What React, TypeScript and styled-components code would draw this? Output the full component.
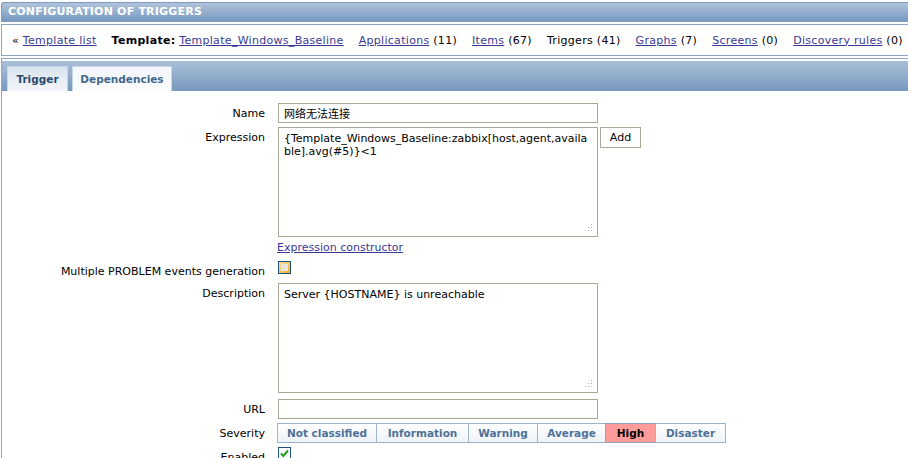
import { createGlobalStyle, styled } from "styled-components";

const GlobalStyle = createGlobalStyle`
  html, body {
    margin: 0;
    padding: 0;
    background: #ffffff;
    overflow: hidden;
  }
  body {
    font-family: "DejaVu Sans", Verdana, "Noto Sans CJK SC", sans-serif;
    font-size: 11px;
    color: #000000;
  }
`;

const navItems = [
	{ label: "Applications", count: 11, link: true },
	{ label: "Items", count: 67, link: true },
	{ label: "Triggers", count: 41, link: false },
	{ label: "Graphs", count: 7, link: true },
	{ label: "Screens", count: 0, link: true },
	{ label: "Discovery rules", count: 0, link: true },
];

const severities = [
	{ name: "Not classified", width: 100 },
	{ name: "Information", width: 93 },
	{ name: "Warning", width: 70 },
	{ name: "Average", width: 69 },
	{ name: "High", width: 51 },
	{ name: "Disaster", width: 71 },
];

const App = () => {
	return (
		<Page>
			<GlobalStyle />
			<HeaderBar>CONFIGURATION OF TRIGGERS</HeaderBar>
			<NavBox>
				<NavItem>
					« <Link>Template list</Link>
				</NavItem>
				<NavItem>
					<b>Template:</b> <Link>Template_Windows_Baseline</Link>
				</NavItem>
				{navItems.map((el) => (
					<NavItem key={el.label}>
						{el.link ? <Link>{el.label}</Link> : el.label} ({el.count})
					</NavItem>
				))}
			</NavBox>
			<TabStrip>
				<TabBar>
					<Tab $active $width={61}>
						Trigger
					</Tab>
					<Tab $width={100}>Dependencies</Tab>
				</TabBar>
			</TabStrip>
			<FormArea>
				<Label>Name</Label>
				<Field>
					<TextInput defaultValue="网络无法连接" />
				</Field>

				<Label>Expression</Label>
				<Field>
					<AreaWrap>
						<TextArea
							defaultValue="{Template_Windows_Baseline:zabbix[host,agent,available].avg(#5)}<1"
						/>
						<Grip />
					</AreaWrap>
					<AddButton>Add</AddButton>
				</Field>

				<Label />
				<Field $ml={-1}>
					<Link>Expression constructor</Link>
				</Field>

				<Label $top={7}>Multiple PROBLEM events generation</Label>
				<Field $height={21}>
					<CheckBox $hover>
						<CheckInner />
					</CheckBox>
				</Field>

				<Label>Description</Label>
				<Field>
					<AreaWrap>
						<TextArea defaultValue="Server {HOSTNAME} is unreachable" />
						<Grip />
					</AreaWrap>
				</Field>

				<Label $mt={2}>URL</Label>
				<Field $mt={2}>
					<TextInput defaultValue="" />
				</Field>

				<Label>Severity</Label>
				<Field>
					<SeverityGroup>
						{severities.map((s) => (
							<SeverityButton
								key={s.name}
								$width={s.width}
								$selected={s.name === "High"}
							>
								{s.name}
							</SeverityButton>
						))}
					</SeverityGroup>
				</Field>

				<Label>Enabled</Label>
				<Field>
					<CheckBox>
						<svg width="11" height="11" viewBox="0 0 11 11">
							<path
								d="M2 5.5 L4.3 8 L9 2.5"
								stroke="#1fa01f"
								strokeWidth="2"
								fill="none"
							/>
						</svg>
					</CheckBox>
				</Field>
			</FormArea>
		</Page>
	);
};

export default App;

const Page = styled.div`
	width: 930px;
	padding-left: 1px;
	padding-top: 2px;
`;

const HeaderBar = styled.div`
	height: 20px;
	box-sizing: border-box;
	border: 1px solid #7e9bc0;
	border-right: none;
	border-radius: 3px 0 0 0;
	background: linear-gradient(#b0c3da, #7899c0);
	color: #ffffff;
	font-weight: bold;
	font-size: 11px;
	line-height: 18px;
	padding-left: 6px;
	letter-spacing: 0.2px;
`;

const NavBox = styled.div`
	margin-top: 2px;
	height: 32px;
	box-sizing: border-box;
	border: 1px solid #8ea7c6;
	border-right: none;
	display: flex;
	align-items: center;
	gap: 15px;
	padding-left: 10px;
	white-space: nowrap;
	letter-spacing: 0.3px;
`;

const NavItem = styled.span`
	color: #000000;

	b {
		font-weight: bold;
	}
`;

const Link = styled.a`
	color: #3a3a96;
	text-decoration: underline;
	cursor: pointer;
`;

const TabStrip = styled.div`
	margin-top: 2px;
	border-top: 1px solid #8ea7c6;
	border-left: 1px solid #8ea7c6;
	padding-top: 2px;
`;

const TabBar = styled.div`
	height: 30px;
	background: linear-gradient(#aabfd8, #7799bf);
	display: flex;
	align-items: flex-end;
	gap: 4px;
	padding-left: 5px;
`;

const Tab = styled.div<{ $active?: boolean; $width: number }>`
	width: ${(p) => p.$width}px;
	height: 25px;
	box-sizing: border-box;
	line-height: 24px;
	font-weight: bold;
	font-size: 10.5px;
	border: 1px solid #c9d6e4;
	border-bottom: none;
	color: ${(p) => (p.$active ? "#2d4b6e" : "#44678e")};
	background: ${(p) =>
		p.$active
			? "linear-gradient(#d9e3ee, #f3f6fa)"
			: "linear-gradient(#f2f6fa, #fbfcfd)"};
	text-align: center;
`;

const FormArea = styled.div`
	border-left: 1px solid #8ea7c6;
	padding-top: 12px;
	display: grid;
	grid-template-columns: 263px 1fr;
	column-gap: 13px;
	row-gap: 4px;
	align-items: start;
`;

const Label = styled.div<{ $top?: number; $mt?: number }>`
	text-align: right;
	line-height: 13px;
	padding-top: ${(p) => p.$top ?? 4}px;
	margin-top: ${(p) => p.$mt ?? 0}px;
	white-space: nowrap;
`;

const Field = styled.div<{ $height?: number; $mt?: number; $ml?: number }>`
	display: flex;
	align-items: flex-start;
	gap: 2px;
	line-height: 13px;
	margin-top: ${(p) => p.$mt ?? 0}px;
	margin-left: ${(p) => p.$ml ?? 0}px;
	${(p) => (p.$height ? `height: ${p.$height}px;` : "")}
`;

const TextInput = styled.input`
	width: 320px;
	height: 20px;
	box-sizing: border-box;
	border: 1px solid #aaa797;
	padding: 0 5px;
	font-family: "DejaVu Sans", Verdana, "Noto Sans CJK SC", sans-serif;
	font-size: 11px;
	color: #000000;
	outline: none;
`;

const AreaWrap = styled.div`
	position: relative;
	width: 320px;
	height: 110px;
`;

const TextArea = styled.textarea`
	width: 320px;
	height: 110px;
	box-sizing: border-box;
	border: 1px solid #aaa797;
	padding: 4px 5px;
	font-family: "DejaVu Sans", Verdana, sans-serif;
	font-size: 11px;
	line-height: 13px;
	color: #000000;
	resize: none;
	outline: none;
	overflow: hidden;
	word-break: break-all;
	display: block;
`;

const Grip = styled.div`
	position: absolute;
	right: 6px;
	bottom: 6px;
	width: 8px;
	height: 8px;
	background:
		radial-gradient(circle, #b0b0b0 0.8px, transparent 1px) 0 0 / 3px 3px;
	clip-path: polygon(100% 0, 100% 100%, 0 100%);
`;

const AddButton = styled.button`
	width: 41px;
	height: 21px;
	box-sizing: border-box;
	border: 1px solid #aaa797;
	background: #ffffff;
	font-family: "DejaVu Sans", Verdana, sans-serif;
	font-size: 11px;
	color: #000000;
	padding: 0;
`;

const CheckBox = styled.div<{ $hover?: boolean }>`
	width: 13px;
	height: 13px;
	box-sizing: border-box;
	border: 1px solid #1c5180;
	margin-top: ${(p) => (p.$hover ? "3px" : "0")};
	background: ${(p) =>
		p.$hover ? "linear-gradient(135deg, #fde29a, #f3a92c)" : "#ffffff"};
	display: flex;
	align-items: center;
	justify-content: center;

	svg {
		display: block;
	}
`;

const CheckInner = styled.div`
	width: 7px;
	height: 7px;
	background: #e6e4de;
`;

const SeverityGroup = styled.div`
	display: flex;
	margin-left: -1px;
`;

const SeverityButton = styled.div<{ $selected?: boolean; $width: number }>`
	width: ${(p) => p.$width}px;
	height: 20px;
	box-sizing: border-box;
	border: 1px solid ${(p) => (p.$selected ? "#8aa5c4" : "#9db3cd")};
	margin-right: -1px;
	line-height: 18px;
	text-align: center;
	font-weight: bold;
	font-size: 10.5px;
	color: ${(p) => (p.$selected ? "#000000" : "#4e7199")};
	background: ${(p) =>
		p.$selected ? "#ff9b9b" : "linear-gradient(#ffffff, #eef3f8)"};
	white-space: nowrap;
`;
